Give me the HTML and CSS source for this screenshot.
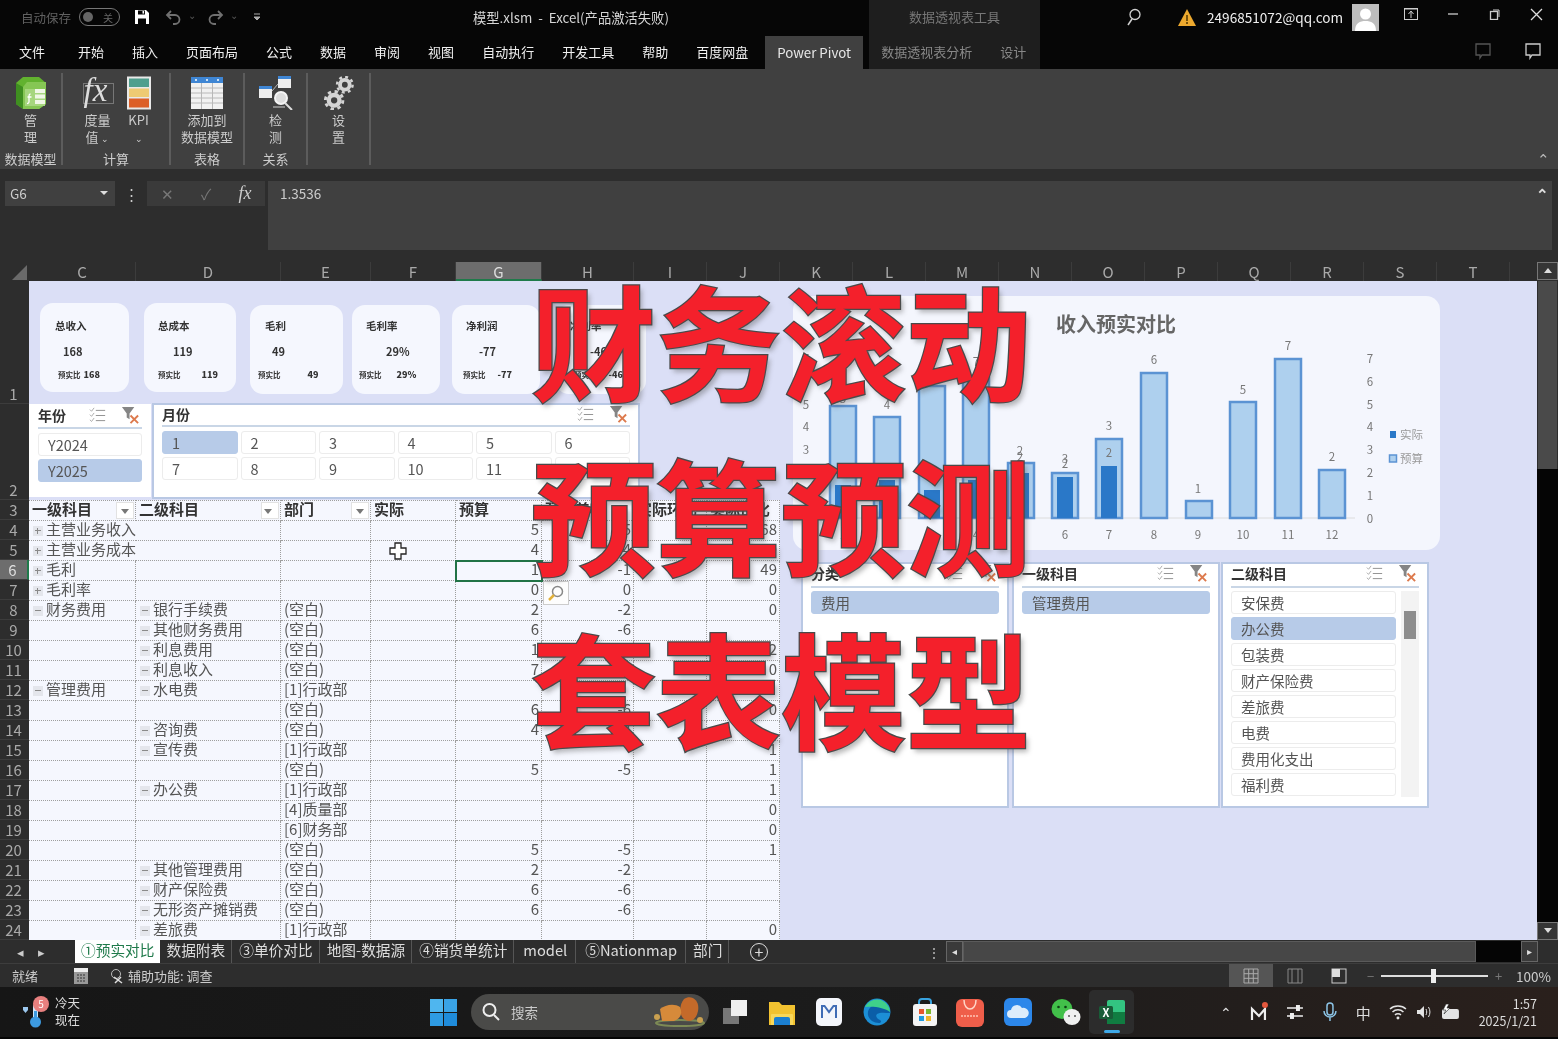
FILE: index.html
```html
<!DOCTYPE html>
<html lang="zh-CN">
<head>
<meta charset="utf-8">
<title>模型.xlsm - Excel</title>
<link rel="stylesheet" href="styles.css">
</head>
<body>
<svg class="defs" width="0" height="0" aria-hidden="true">
  <symbol id="i-multi" viewBox="0 0 20 20"><g fill="none" stroke="#8d8d8d" stroke-width="1.1"><path d="M1 3l2 2 3-4M1 9l2 2 3-4M1 15l2 2 3-4" stroke="#a8a8a8"/><path d="M8 4h11M8 10h11M8 16h11"/></g></symbol>
  <symbol id="i-clear" viewBox="0 0 20 20"><path d="M1 1h13L9 8v6L6 12V8z" fill="#858585"/><path d="M10 10l8 8M18 10l-8 8" stroke="#dd7a4d" stroke-width="2"/></symbol>
</svg>
<div class="app">
  <header class="titlebar">
    <div class="qat">
      <span class="autosave">自动保存</span>
      <span class="toggle"><i></i><b>关</b></span>
      <svg class="q-save" width="16" height="16" viewBox="0 0 16 16"><path d="M1 1h11l3 3v11H1z" fill="#fff"/><path d="M4 1.500h7v4H4z" fill="#050505"/><path d="M4 9.500h8V15H4z" fill="#050505"/><path d="M8.500 2h1.600v2.600H8.500z" fill="#fff"/></svg>
      <svg class="q-undo" width="17" height="16" viewBox="0 0 17 16"><path d="M6 2L2 6l4 4M2 6h8a4.500 4.500 0 0 1 0 9H8" fill="none" stroke="#707070" stroke-width="1.800"/></svg>
      <span class="q-caret">⌄</span>
      <svg class="q-redo" width="17" height="16" viewBox="0 0 17 16"><path d="M11 2l4 4-4 4M15 6H7a4.500 4.500 0 0 0 0 9h2" fill="none" stroke="#707070" stroke-width="1.800"/></svg>
      <span class="q-caret">⌄</span>
      <svg class="q-more" width="8" height="8" viewBox="0 0 8 8"><path d="M1 1h6M1 4h6l-3 3z" stroke="#aaa" fill="#aaa"/></svg>
    </div>
    <div class="doc">模型.xlsm&nbsp; -&nbsp; Excel(产品激活失败)</div>
    <div class="ctx-title">数据透视表工具</div>
    <svg class="t-search" width="18" height="18" viewBox="0 0 18 18"><circle cx="11" cy="6.500" r="5" fill="none" stroke="#d0d0d0" stroke-width="1.300"/><path d="M8 11l-4 6" stroke="#d0d0d0" stroke-width="1.500"/></svg>
    <svg class="t-warn" width="18" height="17" viewBox="0 0 18 17"><path d="M9 0l9 17H0z" fill="#eda92e"/><path d="M8.200 6h1.600v6H8.200zM8.200 13h1.600v2H8.200z" fill="#5a3d00"/></svg>
    <span class="email">2496851072@qq.com</span>
    <svg class="avatar" width="27" height="27" viewBox="0 0 27 27"><rect width="27" height="27" fill="#bdbdbd"/><circle cx="13.500" cy="10" r="5.500" fill="#fff"/><path d="M3 27c0-8 5-10 10.500-10S24 19 24 27z" fill="#fff"/></svg>
    <svg class="win-a" width="14" height="14" viewBox="0 0 14 14"><rect x=".5" y="1.500" width="13" height="11" fill="none" stroke="#ccc"/><path d="M7 11V5M4.500 7L7 4l2.500 3M1 2h12" stroke="#ccc" fill="none"/></svg>
    <svg class="win-b" width="12" height="12" viewBox="0 0 12 12"><path d="M1 6h10" stroke="#ccc" stroke-width="1.300"/></svg>
    <svg class="win-c" width="12" height="12" viewBox="0 0 12 12"><rect x="1.500" y="3.500" width="7" height="8" fill="none" stroke="#ccc" stroke-width="1.300"/><path d="M4 2h6v7" fill="none" stroke="#ccc"/></svg>
    <svg class="win-d" width="13" height="13" viewBox="0 0 13 13"><path d="M1 1l11 11M12 1L1 12" stroke="#ddd" stroke-width="1.300"/></svg>
  </header>

  <nav class="tabs">
    <span class="tab tab-first">文件</span><span class="tab">开始</span><span class="tab">插入</span><span class="tab">页面布局</span><span class="tab">公式</span><span class="tab">数据</span><span class="tab">审阅</span><span class="tab">视图</span><span class="tab">自动执行</span><span class="tab">开发工具</span><span class="tab">帮助</span><span class="tab">百度网盘</span>
    <span class="tab tab-active">Power Pivot</span>
    <div class="ctx-tabs"><span class="tab tab-ctx-a">数据透视表分析</span><span class="tab tab-ctx-b">设计</span></div>
    <svg class="chat-a" width="18" height="18" viewBox="0 0 18 18"><path d="M2 2h14v11H8l-2 3v-3H2z" fill="none" stroke="#555" stroke-width="1.300"/></svg>
    <svg class="chat-b" width="18" height="18" viewBox="0 0 18 18"><path d="M2 2h14v11H8l-2 3v-3H2z" fill="none" stroke="#ccc" stroke-width="1.300"/></svg>
  </nav>

  <section class="ribbon">
    <div class="group g1">
      <div class="cmds">
        <div class="cmd">
          <svg class="ic" width="32" height="34" viewBox="0 0 32 34"><path d="M8 1h16l7 6v21l-7 5H8l-7-5V7z" fill="#62b22f"/><path d="M1 7l7 4v22l-7-5z" fill="#3f8f20"/><path d="M8 11L12 6h19v22l-7 5H8z" fill="#86c654"/><path d="M10 13h20v17H10z" fill="#a6d67e"/><path d="M20 13h10v4H20zM20 18.500h10v4H20zM20 24h10v4H20z" fill="#f0f7e6"/><path d="M15.500 18c-1.500 0-1.500 1-1.500 2v6c0 1-1 1.500-2 1.500M12.500 21h4" stroke="#fff" stroke-width="1.300" fill="none"/></svg>
          <span class="lbl">管<br>理</span>
        </div>
      </div>
      <div class="gname">数据模型</div>
    </div>
    <div class="group g2">
      <div class="cmds">
        <div class="cmd cmd-fx">
          <span class="fx-ic"><span class="fx-box"></span><span class="fx-t">fx</span></span>
          <span class="lbl">度量<br>值 <em class="chev">⌄</em></span>
        </div>
        <div class="cmd cmd-kpi">
          <svg class="ic" width="24" height="33" viewBox="0 0 24 33"><rect width="24" height="33" fill="#e9e9e9"/><rect x="2" y="2" width="20" height="8.500" fill="#4f9f8e"/><rect x="2" y="12" width="20" height="8.500" fill="#eeca73"/><rect x="2" y="22" width="20" height="9" fill="#dc5f28"/></svg>
          <span class="lbl">KPI<br><em class="chev">⌄</em></span>
        </div>
      </div>
      <div class="gname">计算</div>
    </div>
    <div class="group g3">
      <div class="cmds">
        <div class="cmd">
          <svg class="ic" width="32" height="32" viewBox="0 0 32 32"><rect width="32" height="32" fill="#f1f1f1"/><rect width="32" height="6" fill="#3f86d4"/><path d="M0 11h32M0 16h32M0 21h32M0 26h32M10.500 6v26M21.500 6v26" stroke="#b8b8b8"/><circle cx="5" cy="3" r="1" fill="#fff"/><circle cx="16" cy="3" r="1" fill="#fff"/><circle cx="27" cy="3" r="1" fill="#fff"/></svg>
          <span class="lbl">添加到<br>数据模型</span>
        </div>
      </div>
      <div class="gname">表格</div>
    </div>
    <div class="group g4">
      <div class="cmds">
        <div class="cmd">
          <svg class="ic" width="34" height="34" viewBox="0 0 34 34"><rect x="19" y="0" width="13" height="12" fill="#eee"/><rect x="19" y="0" width="13" height="3" fill="#3f86d4"/><rect x="0" y="10" width="13" height="12" fill="#eee"/><rect x="0" y="10" width="13" height="3" fill="#3f86d4"/><path d="M13 15l6-7" stroke="#bbb"/><circle cx="22" cy="22" r="6" fill="#ddd" stroke="#f4f4f4" stroke-width="2"/><path d="M26 27l7 7" stroke="#ddd" stroke-width="2"/><path d="M14 31h12" stroke="#888" stroke-width="2"/></svg>
          <span class="lbl">检<br>测</span>
        </div>
      </div>
      <div class="gname">关系</div>
    </div>
    <div class="group g5">
      <div class="cmds">
        <div class="cmd">
          <svg class="ic" width="32" height="35" viewBox="0 0 32 35"><g fill="none" stroke="#d4d4d4"><circle cx="22" cy="9" r="5" stroke-width="4"/><circle cx="22" cy="9" r="8" stroke-width="2.500" stroke-dasharray="3 3.300"/><circle cx="11" cy="25" r="5.500" stroke-width="4.500"/><circle cx="11" cy="25" r="9" stroke-width="3" stroke-dasharray="3.500 3.600"/></g></svg>
          <span class="lbl">设<br>置</span>
        </div>
      </div>
      <div class="gname">&nbsp;</div>
    </div>
    <span class="collapse">⌃</span>
  </section>

  <section class="formula">
    <div class="namebox"><span>G6</span><i class="caret"></i></div>
    <span class="vdots">⋮</span>
    <div class="fbtns"><span class="fb-x">✕</span><span class="fb-ok">✓</span><span class="fb-fx">fx</span></div>
    <div class="finput"><span>1.3536</span><b class="finput-up">⌃</b></div>
  </section>

  <div class="colheads">
    <div class="corner"><i></i></div>
    <div class="ch c-c">C</div><div class="ch c-d">D</div><div class="ch c-e">E</div><div class="ch c-f">F</div><div class="ch c-g sel">G</div><div class="ch c-h">H</div><div class="ch c-i">I</div><div class="ch c-j">J</div>
    <div class="ch">K</div><div class="ch">L</div><div class="ch">M</div><div class="ch">N</div><div class="ch">O</div><div class="ch">P</div><div class="ch">Q</div><div class="ch">R</div><div class="ch">S</div><div class="ch">T</div>
    <div class="ch-rest"></div>
    <div class="vs-up"><i></i></div>
  </div>

  <div class="sheet">
    <div class="rowheads">
      <div class="rh r1">1</div><div class="rh r2">2</div><div class="rh">3</div><div class="rh">4</div><div class="rh">5</div><div class="rh sel">6</div><div class="rh">7</div><div class="rh">8</div><div class="rh">9</div><div class="rh">10</div><div class="rh">11</div><div class="rh">12</div><div class="rh">13</div><div class="rh">14</div><div class="rh">15</div><div class="rh">16</div><div class="rh">17</div><div class="rh">18</div><div class="rh">19</div><div class="rh">20</div><div class="rh">21</div><div class="rh">22</div><div class="rh">23</div><div class="rh">24</div>
    </div>
    <div class="canvas">
      <table class="pivot">
        <colgroup><col class="w-c"><col class="w-d"><col class="w-e"><col class="w-f"><col class="w-g"><col class="w-h"><col class="w-i"><col class="w-j"></colgroup>
        <thead><tr><th>一级科目<i class="dd"></i></th><th>二级科目<i class="dd dd-s"></i></th><th>部门<i class="dd"></i></th><th>实际</th><th>预算</th><th>预实差额</th><th>实际环比</th><th>实际占比</th></tr></thead>
        <tbody>
          <tr><td colspan="2"><i class="ex p"></i>主营业务收入</td><td></td><td></td><td class="n">5</td><td class="n">-5</td><td></td><td class="n">168</td></tr>
          <tr><td colspan="2"><i class="ex p"></i>主营业务成本</td><td></td><td></td><td class="n">4</td><td class="n">-4</td><td></td><td class="n">119</td></tr>
          <tr><td><i class="ex p"></i>毛利</td><td></td><td></td><td></td><td class="n cur">1</td><td class="n">-1</td><td></td><td class="n">49</td></tr>
          <tr><td><i class="ex p"></i>毛利率</td><td></td><td></td><td></td><td class="n">0</td><td class="n">0</td><td></td><td class="n">0</td></tr>
          <tr><td><i class="ex"></i>财务费用</td><td><i class="ex"></i>银行手续费</td><td>(空白)</td><td></td><td class="n">2</td><td class="n">-2</td><td></td><td class="n">0</td></tr>
          <tr><td></td><td><i class="ex"></i>其他财务费用</td><td>(空白)</td><td></td><td class="n">6</td><td class="n">-6</td><td></td><td></td></tr>
          <tr><td></td><td><i class="ex"></i>利息费用</td><td>(空白)</td><td></td><td class="n">1</td><td class="n">-1</td><td></td><td class="n">2</td></tr>
          <tr><td></td><td><i class="ex"></i>利息收入</td><td>(空白)</td><td></td><td class="n">7</td><td class="n">-7</td><td></td><td class="n">0</td></tr>
          <tr><td><i class="ex"></i>管理费用</td><td><i class="ex"></i>水电费</td><td>[1]行政部</td><td></td><td></td><td></td><td></td><td></td></tr>
          <tr><td></td><td></td><td>(空白)</td><td></td><td class="n">6</td><td class="n">-6</td><td></td><td class="n">0</td></tr>
          <tr><td></td><td><i class="ex"></i>咨询费</td><td>(空白)</td><td></td><td class="n">4</td><td class="n">-4</td><td></td><td></td></tr>
          <tr><td></td><td><i class="ex"></i>宣传费</td><td>[1]行政部</td><td></td><td></td><td></td><td></td><td class="n">1</td></tr>
          <tr><td></td><td></td><td>(空白)</td><td></td><td class="n">5</td><td class="n">-5</td><td></td><td class="n">1</td></tr>
          <tr><td></td><td><i class="ex"></i>办公费</td><td>[1]行政部</td><td></td><td></td><td></td><td></td><td class="n">1</td></tr>
          <tr><td></td><td></td><td>[4]质量部</td><td></td><td></td><td></td><td></td><td class="n">0</td></tr>
          <tr><td></td><td></td><td>[6]财务部</td><td></td><td></td><td></td><td></td><td class="n">0</td></tr>
          <tr><td></td><td></td><td>(空白)</td><td></td><td class="n">5</td><td class="n">-5</td><td></td><td class="n">1</td></tr>
          <tr><td></td><td><i class="ex"></i>其他管理费用</td><td>(空白)</td><td></td><td class="n">2</td><td class="n">-2</td><td></td><td></td></tr>
          <tr><td></td><td><i class="ex"></i>财产保险费</td><td>(空白)</td><td></td><td class="n">6</td><td class="n">-6</td><td></td><td></td></tr>
          <tr><td></td><td><i class="ex"></i>无形资产摊销费</td><td>(空白)</td><td></td><td class="n">6</td><td class="n">-6</td><td></td><td></td></tr>
          <tr><td></td><td><i class="ex"></i>差旅费</td><td>[1]行政部</td><td></td><td></td><td></td><td></td><td class="n">0</td></tr>
        </tbody>
      </table>

      <div class="card k1"><div class="k-t">总收入</div><div class="k-v">168</div><div class="k-f"><span>预实比</span><b>168</b></div></div>
      <div class="card k2"><div class="k-t">总成本</div><div class="k-v">119</div><div class="k-f"><span>预实比</span><b>119</b></div></div>
      <div class="card k3"><div class="k-t">毛利</div><div class="k-v">49</div><div class="k-f"><span>预实比</span><b>49</b></div></div>
      <div class="card k4"><div class="k-t">毛利率</div><div class="k-v">29%</div><div class="k-f"><span>预实比</span><b>29%</b></div></div>
      <div class="card k5"><div class="k-t">净利润</div><div class="k-v">-77</div><div class="k-f"><span>预实比</span><b>-77</b></div></div>
      <div class="card k6"><div class="k-t">净利率</div><div class="k-v">-46%</div><div class="k-f"><span>预实比</span><b>-46%</b></div></div>

      <div class="slicer s-year">
        <div class="s-head"><span>年份</span><svg class="s-i" width="17" height="17"><use href="#i-multi"/></svg><svg class="s-i" width="19" height="19"><use href="#i-clear"/></svg></div>
        <div class="s-list"><div class="btn">Y2024</div><div class="btn on">Y2025</div></div>
      </div>
      <div class="slicer s-month">
        <div class="s-head"><span>月份</span><svg class="s-i" width="17" height="17"><use href="#i-multi"/></svg><svg class="s-i" width="19" height="19"><use href="#i-clear"/></svg></div>
        <div class="s-grid"><div class="btn on">1</div><div class="btn">2</div><div class="btn">3</div><div class="btn">4</div><div class="btn">5</div><div class="btn">6</div><div class="btn">7</div><div class="btn">8</div><div class="btn">9</div><div class="btn">10</div><div class="btn">11</div><div class="btn">12</div></div>
      </div>

      <div class="chart">
        <svg width="647" height="254" viewBox="793 296 647 254">
          <text x="1056" y="332" class="c-title">收入预实对比</text>
          <g class="axis">
            <text x="806" y="363">7</text><text x="806" y="386">6</text><text x="806" y="409">5</text><text x="806" y="431">4</text><text x="806" y="454">3</text><text x="806" y="477">2</text><text x="806" y="500">1</text><text x="806" y="523">0</text>
            <text x="1370" y="363">7</text><text x="1370" y="386">6</text><text x="1370" y="409">5</text><text x="1370" y="431">4</text><text x="1370" y="454">3</text><text x="1370" y="477">2</text><text x="1370" y="500">1</text><text x="1370" y="523">0</text>
          </g>
          <path d="M821 518h534" stroke="#dcdcdc"/>
          <g class="bud">
            <rect x="830" y="406" width="26" height="112"/><rect x="874" y="417" width="26" height="101"/><rect x="919" y="386" width="26" height="132"/><rect x="963" y="378" width="26" height="140"/><rect x="1008" y="463" width="26" height="55"/><rect x="1052" y="473" width="26" height="45"/><rect x="1096" y="439" width="26" height="79"/><rect x="1141" y="373" width="26" height="145"/><rect x="1186" y="501" width="26" height="17"/><rect x="1230" y="402" width="26" height="116"/><rect x="1275" y="359" width="26" height="159"/><rect x="1319" y="470" width="26" height="48"/>
          </g>
          <g class="act">
            <rect x="835" y="485" width="16" height="33"/><rect x="879" y="480" width="16" height="38"/><rect x="924" y="490" width="16" height="28"/><rect x="968" y="480" width="16" height="38"/><rect x="1013" y="473" width="16" height="45"/><rect x="1057" y="477" width="16" height="41"/><rect x="1101" y="466" width="16" height="52"/>
          </g>
          <g class="dl">
            <text x="843" y="403">5</text><text x="887" y="409">4</text><text x="932" y="381">6</text><text x="976" y="366">7</text><text x="1020" y="455">2</text><text x="1020" y="461">2</text><text x="1065" y="463">3</text><text x="1065" y="468">2</text><text x="1109" y="430">3</text><text x="1109" y="457">2</text><text x="1154" y="364">6</text><text x="1198" y="493">1</text><text x="1243" y="394">5</text><text x="1288" y="350">7</text><text x="1332" y="461">2</text>
            <text x="843" y="539">1</text><text x="887" y="539">2</text><text x="932" y="539">3</text><text x="976" y="539">4</text><text x="1020" y="539">5</text><text x="1065" y="539">6</text><text x="1109" y="539">7</text><text x="1154" y="539">8</text><text x="1198" y="539">9</text><text x="1243" y="539">10</text><text x="1288" y="539">11</text><text x="1332" y="539">12</text>
          </g>
          <rect x="1390" y="431" width="6" height="7" fill="#2a78c8"/><text x="1400" y="439" class="lg">实际</text>
          <rect x="1389.500" y="455" width="7" height="7" fill="#aed0ee" stroke="#5b93d3" stroke-width="1.500"/><text x="1400" y="463" class="lg">预算</text>
        </svg>
      </div>

      <div class="slicer s-a">
        <div class="s-head"><span>分类</span><svg class="s-i" width="17" height="17"><use href="#i-multi"/></svg><svg class="s-i" width="19" height="19"><use href="#i-clear"/></svg></div>
        <div class="s-list"><div class="btn on">费用</div></div>
      </div>
      <div class="slicer s-b">
        <div class="s-head"><span>一级科目</span><svg class="s-i" width="17" height="17"><use href="#i-multi"/></svg><svg class="s-i" width="19" height="19"><use href="#i-clear"/></svg></div>
        <div class="s-list"><div class="btn on">管理费用</div></div>
      </div>
      <div class="slicer s-c">
        <div class="s-head"><span>二级科目</span><svg class="s-i" width="17" height="17"><use href="#i-multi"/></svg><svg class="s-i" width="19" height="19"><use href="#i-clear"/></svg></div>
        <div class="s-scroll">
          <div class="s-list"><div class="btn">安保费</div><div class="btn on">办公费</div><div class="btn">包装费</div><div class="btn">财产保险费</div><div class="btn">差旅费</div><div class="btn">电费</div><div class="btn">费用化支出</div><div class="btn">福利费</div></div>
          <div class="s-bar"><i></i></div>
        </div>
      </div>

      <svg class="cross" width="18" height="18" viewBox="0 0 18 18"><path d="M6 1h6v5h5v6h-5v5H6v-5H1V6h5z" fill="#fff" stroke="#222" stroke-width="1.300"/></svg>
      <div class="quick"><svg width="18" height="18" viewBox="0 0 18 18"><circle cx="10.500" cy="7.500" r="5" fill="none" stroke="#888" stroke-width="1.500"/><path d="M7 11l-5 5" stroke="#e3b23c" stroke-width="2.500"/></svg></div>
    </div>
    <div class="vscroll"><div class="vs-thumb"></div><div class="vs-empty"></div><div class="vs-down"><i></i></div></div>
  </div>

  <div class="sheettabs">
    <span class="nav-arrow">◂</span><span class="nav-arrow">▸</span>
    <div class="stabs">
      <span class="st on">①预实对比</span><span class="st">数据附表</span><span class="st">③单价对比</span><span class="st">地图-数据源</span><span class="st">④销货单统计</span><span class="st st-m">model</span><span class="st st-m">⑤Nationmap</span><span class="st">部门</span>
    </div>
    <span class="addsheet">+</span>
    <span class="st-dots">⋮</span>
    <div class="hscroll"><span class="hs-b">◂</span><div class="hs-thumb"></div><div class="hs-empty"></div><span class="hs-b hs-r">▸</span></div>
  </div>

  <footer class="status">
    <span class="ready">就绪</span>
    <svg class="st-cal" width="14" height="16" viewBox="0 0 14 16"><rect width="14" height="16" fill="#999"/><rect y="0" width="14" height="4" fill="#eee"/><path d="M3 7h2M6 7h2M9 7h2M3 10h2M6 10h2M9 10h2M3 13h2M6 13h2M9 13h2" stroke="#333"/></svg>
    <svg class="st-acc" width="14" height="16" viewBox="0 0 14 16"><circle cx="6" cy="6" r="4.500" fill="none" stroke="#bbb"/><path d="M4 9l8 6M11 9l-6 6" stroke="#ddd" stroke-width="1.500"/></svg>
    <span class="acc">辅助功能: 调查</span>
    <div class="views">
      <span class="v on"><svg width="16" height="16" viewBox="0 0 16 16"><path d="M1 1h14v14H1zM1 5.700h14M1 10.300h14M5.700 1v14M10.300 1v14" fill="none" stroke="#aaa"/></svg></span>
      <span class="v"><svg width="16" height="16" viewBox="0 0 16 16"><path d="M1 1h14v14H1zM5 1v14M11 1v14" fill="none" stroke="#888"/></svg></span>
      <span class="v"><svg width="16" height="16" viewBox="0 0 16 16"><rect x="1" y="1" width="14" height="14" fill="#2d2d2d" stroke="#ccc"/><rect x="1" y="1" width="8" height="8" fill="#ddd"/></svg></span>
    </div>
    <div class="zoomer"><span class="z-s">−</span><div class="z-track"><i></i></div><span class="z-s">+</span><span class="z-val">100%</span></div>
  </footer>

  <div class="taskbar">
    <div class="weather">
      <svg class="w-ic" width="28" height="34" viewBox="0 0 28 34"><rect x="11" y="9" width="5" height="16" rx="2.500" fill="#cfe6f7"/><circle cx="13.500" cy="27" r="5.500" fill="#3d9ae0"/><rect x="12" y="16" width="3" height="10" fill="#3d9ae0"/><path d="M1 12h5v3l-2.500 3L1 15z" fill="#9cc8ee"/><circle cx="19" cy="9" r="8" fill="#e8807f"/><text x="19" y="13" class="w-n">5</text></svg>
      <div class="w-t"><span>冷天</span><span>现在</span></div>
    </div>
    <div class="center">
      <svg class="start" width="27" height="27" viewBox="0 0 27 27"><rect width="13" height="13" fill="#4fb6ef"/><rect x="14" width="13" height="13" fill="#3aa3e6"/><rect y="14" width="13" height="13" fill="#2e9be3"/><rect x="14" y="14" width="13" height="13" fill="#1f8cdb"/></svg>
      <div class="search">
        <svg width="20" height="20" viewBox="0 0 20 20"><circle cx="8.500" cy="8" r="6" fill="none" stroke="#eee" stroke-width="2"/><path d="M13 13l5 5" stroke="#eee" stroke-width="2"/></svg>
        <span>搜索</span>
        <svg class="deco" width="56" height="34" viewBox="0 0 56 34"><ellipse cx="30" cy="28" rx="24" ry="3" fill="none" stroke="#7d8a55" stroke-width="2"/><path d="M34 4c8-5 16 2 14 12s-9 12-14 8-5-14 0-20z" fill="#c46a2a"/><path d="M10 14c5-4 14-6 20-2 3 7 0 12-6 14H12z" fill="#d68a3a"/><circle cx="7" cy="22" r="3" fill="#c9a050"/><circle cx="50" cy="25" r="3" fill="#c9a050"/></svg>
      </div>
      <svg class="ti ti-task" width="28" height="28" viewBox="0 0 28 28"><rect x="2" y="10" width="16" height="16" fill="#777"/><rect x="10" y="2" width="16" height="16" fill="#efefef"/></svg>
      <svg class="ti ti-file" width="28" height="28" viewBox="0 0 28 28"><path d="M1 4h10l3 3h13v20H1z" fill="#f2c230"/><path d="M4 16h20a1 1 0 0 1 1 1v10H3V17a1 1 0 0 1 1-1z" fill="#f8d75a"/><path d="M8 19h12a2 2 0 0 1 2 2v6H6v-6a2 2 0 0 1 2-2z" fill="#1b7fd1"/></svg>
      <svg class="ti ti-m" width="26" height="28" viewBox="0 0 26 28"><rect width="26" height="28" rx="5" fill="#f4f6fb"/><path d="M6 20V8h2.500l4.500 6 4.500-6H20v12" fill="none" stroke="#3f6cb5" stroke-width="2"/></svg>
      <svg class="ti" width="28" height="28" viewBox="0 0 28 28"><circle cx="14" cy="14" r="13.500" fill="#1c8fd6"/><path d="M27 15c0-5-5-9-11-9-7 0-12 5-11 11 1 5 6 8 11 8 2 0 3-2 1-3-3-1-5-4-3-6 3-2 9-1 13-1z" fill="#0b5ea8"/><path d="M2 9C5 3 12 0 18 2c5 2 9 7 9 12-5-4-15-6-25-5z" fill="#3fd08a"/></svg>
      <svg class="ti" width="26" height="28" viewBox="0 0 26 28"><path d="M7 8V4a3 3 0 0 1 3-3h6a3 3 0 0 1 3 3v4" fill="none" stroke="#38a3e0" stroke-width="2"/><rect x="1" y="6" width="24" height="22" rx="3" fill="#f4f4f4"/><rect x="7" y="11" width="5" height="5" fill="#e7562e"/><rect x="14" y="11" width="5" height="5" fill="#7cb82f"/><rect x="7" y="18" width="5" height="5" fill="#1f9be0"/><rect x="14" y="18" width="5" height="5" fill="#f0b429"/></svg>
      <svg class="ti ti-hw" width="28" height="30" viewBox="0 0 28 30"><rect y="2" width="28" height="28" rx="6" fill="#ef5e4a"/><path d="M8 3c0 6 3 9 6 9s6-3 6-9" fill="none" stroke="#ffd5c8" stroke-width="1.500"/><path d="M5 19h18" stroke="#ffc4b5" stroke-width="1.500" stroke-dasharray="2 1"/></svg>
      <svg class="ti ti-cl" width="28" height="30" viewBox="0 0 28 30"><rect y="1" width="28" height="28" rx="6" fill="#2c87ea"/><path d="M7 21a4 4 0 0 1 0-8 6 6 0 0 1 11-2 5 5 0 0 1 3 10z" fill="#dcecfb"/></svg>
      <svg class="ti ti-wx" width="30" height="28" viewBox="0 0 30 28"><ellipse cx="11" cy="11" rx="10.500" ry="10" fill="#42c04a"/><circle cx="7.500" cy="9" r="1.300" fill="#0d4014"/><circle cx="14.500" cy="9" r="1.300" fill="#0d4014"/><ellipse cx="21" cy="19" rx="8.500" ry="8" fill="#f0f0f0"/><circle cx="18" cy="18" r="1" fill="#555"/><circle cx="24" cy="18" r="1" fill="#555"/></svg>
      <div class="ti-excel"><svg width="26" height="26" viewBox="0 0 26 26"><rect x="8" y="1" width="18" height="24" rx="2" fill="#33c481"/><rect x="8" y="13" width="18" height="12" fill="#107c41"/><rect y="7" width="14" height="13" rx="1.500" fill="#185c37"/><text x="7" y="18" class="x-t">X</text></svg><i></i></div>
    </div>
    <div class="tray">
      <span class="tr-up">⌃</span>
      <svg class="tr-m" width="18" height="20" viewBox="0 0 18 20"><path d="M2 18V7l7 7 6-7v11" fill="none" stroke="#eee" stroke-width="2.200"/><circle cx="15" cy="3" r="3" fill="#e4583e"/></svg>
      <svg width="18" height="18" viewBox="0 0 18 18"><path d="M1 5h16M1 13h16" stroke="#eee" stroke-width="1.500"/><rect x="10" y="2" width="4" height="6" fill="#eee"/><rect x="4" y="10" width="4" height="6" fill="#eee"/></svg>
      <svg width="16" height="20" viewBox="0 0 16 20"><rect x="5" y="1" width="6" height="12" rx="3" fill="none" stroke="#8cc4e6" stroke-width="1.500"/><path d="M2 9a6 6 0 0 0 12 0M8 15v4" fill="none" stroke="#8cc4e6" stroke-width="1.500"/></svg>
      <span class="tr-zh">中</span>
      <svg width="18" height="16" viewBox="0 0 18 16"><g fill="none" stroke="#e4e4e4" stroke-width="1.500"><path d="M1 5c4-4 12-4 16 0M3.500 8c3-3 8-3 11 0M6 11c1.500-1.500 4.500-1.500 6 0"/></g><circle cx="9" cy="14" r="1.500" fill="#e4e4e4"/></svg>
      <svg class="tr-tight" width="16" height="16" viewBox="0 0 16 16"><path d="M1 6h3l4-4v12l-4-4H1z" fill="#e4e4e4"/><path d="M10 5c1 2 1 4 0 6M12.500 3c2 3 2 7 0 10" fill="none" stroke="#e4e4e4"/></svg>
      <svg class="tr-tight" width="20" height="16" viewBox="0 0 20 16"><rect x="1" y="5" width="17" height="10" rx="2" fill="#e4e4e4"/><path d="M5 0l-3 6h3L3 10l6-6H6l2-4z" fill="#fff" stroke="#222" stroke-width=".6"/></svg>
      <div class="clock"><span>1:57</span><span>2025/1/21</span></div>
    </div>
  </div>

  <div class="bigtitle"><div>财务滚动</div><div>预算预测</div><div>套表模型</div></div>
</div>
</body>
</html>
```

FILE: styles.css
```css
* { box-sizing: border-box; }
html, body { margin: 0; padding: 0; background: #000; }
body { font-family: "Noto Sans CJK SC", "Open Sans", sans-serif; }
.defs { position: absolute; }
.app { position: relative; width: 1558px; height: 1039px; overflow: hidden; display: flex; flex-direction: column; filter: blur(.5px); background: #2d2d2d; }
em, i { font-style: normal; }

/* title bar */
.titlebar { height: 34px; background: #060606; display: flex; align-items: center; flex: none; }
.qat { display: flex; align-items: center; width: 473px; padding-left: 21px; flex: none; }
.autosave { font-size: 12.500px; color: #616161; width: 58px; }
.toggle { width: 41px; height: 18px; border: 1px solid #777; border-radius: 9px; display: flex; align-items: center; justify-content: space-between; padding: 0 6px 0 3px; }
.toggle i { width: 10px; height: 10px; border-radius: 50%; background: #666; }
.toggle b { font-weight: 400; font-size: 10px; color: #666; }
.q-save { margin-left: 14px; }
.q-undo { margin-left: 15px; }
.q-redo { margin-left: 7px; }
.q-caret { color: #555; font-size: 10px; margin: -5px 0 0 6px; width: 12px; }
.q-more { margin-left: 11px; }
.doc { width: 396px; color: #d6d6d6; font-size: 13.300px; flex: none; }
.ctx-title { width: 171px; height: 34px; background: #1e1e1e; color: #777; font-size: 13px; line-height: 34px; text-align: center; flex: none; }
.t-search { margin-left: 84px; }
.t-warn { margin-left: 36px; }
.email { color: #eee; font-size: 13.600px; margin-left: 11px; width: 136px; white-space: nowrap; }
.avatar { margin-left: 9px; }
.win-a { margin: -6px 0 0 25px; }
.win-b { margin: -6px 0 0 29px; }
.win-c { margin: -6px 0 0 30px; }
.win-d { margin: -6px 0 0 29px; }

/* ribbon tabs */
.tabs { height: 35px; background: #060606; display: flex; align-items: stretch; padding-left: 5px; flex: none; color: #f0f0f0; font-size: 13px; }
.tab { padding: 0 14px; line-height: 35px; white-space: nowrap; }
.tab-first { margin-right: 5px; }
.tab-active { background: #404040; width: 98px; padding: 0 12px; margin: 2px 0 0 3px; line-height: 33px; font-size: 13.300px; color: #e8e8e8; }
.ctx-tabs { display: flex; background: #1e1e1e; margin-left: 6px; color: #888; }
.tab-ctx-a { padding-left: 12px; }
.chat-a { margin: 8px 0 0 434px; }
.chat-b { margin: 8px 0 0 32px; }

/* ribbon */
.ribbon { height: 100px; background: #404040; display: flex; padding: 4px 0 4px; position: relative; flex: none; color: #ccc; }
.group { border-right: 2px solid #5c5c5c; display: flex; flex-direction: column; height: 92px; align-items: center; }
.g1 { width: 63px; } .g2 { width: 108px; } .g3 { width: 74px; } .g4 { width: 63px; } .g5 { width: 63px; }
.cmds { display: flex; flex: 1; justify-content: center; min-height: 0; }
.cmd { display: flex; flex-direction: column; align-items: center; padding-top: 3px; }
.ic { height: 34px; flex: none; }
.lbl { font-size: 13px; line-height: 17px; text-align: center; margin-top: 1px; white-space: nowrap; }
.chev { font-size: 9px; line-height: 9px; }
.gname { font-size: 13px; line-height: 16px; height: 16px; margin-bottom: -2px; white-space: nowrap; }
.cmd-fx { margin-right: 13px; }
.fx-ic { position: relative; display: block; width: 32px; height: 34px; }
.fx-box { position: absolute; left: 1px; top: 7px; width: 31px; height: 21px; border: 1px solid #777; }
.fx-t { position: absolute; left: 2px; top: -5px; font: italic 33px/38px "Liberation Serif", serif; color: #ddd; }
.collapse { position: absolute; right: 8px; bottom: 0; color: #bbb; font-size: 15px; }

/* formula bar */
.formula { height: 93px; background: #2d2d2d; display: flex; padding-top: 12px; flex: none; }
.namebox { margin-left: 5px; width: 110px; height: 25px; background: #404040; color: #ccc; font-size: 13.500px; line-height: 25px; padding-left: 5px; position: relative; }
.caret { position: absolute; right: 7px; top: 10px; border: 4px solid transparent; border-top-color: #ddd; border-bottom: 0; }
.vdots { width: 32px; text-align: center; color: #ccc; font-size: 15px; line-height: 25px; }
.fbtns { width: 118px; height: 25px; background: #3a3a3a; display: flex; align-items: center; justify-content: space-around; color: #777; font-size: 15px; }
.fb-fx { font: italic 18px "Liberation Serif", serif; color: #ccc; }
.finput { margin-left: 3px; width: 1284px; height: 69px; background: #404040; color: #ccc; font-size: 13.500px; line-height: 25px; padding-left: 12px; display: flex; justify-content: space-between; padding-right: 3px; }
.finput-up { font-size: 15px; color: #ddd; }

/* column headers */
.colheads { height: 19px; display: flex; flex: none; background: #2d2d2d; }
.corner { width: 29px; position: relative; }
.corner i { position: absolute; left: 12px; bottom: 1px; border-style: solid; border-width: 0 0 15px 15px; border-color: transparent transparent #6a6a6a transparent; }
.ch { width: 73px; color: #a9a9a9; font-size: 15px; line-height: 19px; text-align: center; border-right: 1px solid #3c3c3c; flex: none; }
.c-c { width: 107px; } .c-d { width: 145px; } .c-e { width: 90px; } .c-f { width: 85px; } .c-g { width: 86px; } .c-h { width: 92px; } .c-i { width: 73px; } .c-j { width: 73px; }
.ch.sel { background: #6d6d6d; color: #ddd; border-bottom: 2px solid #1f7a4a; }
.ch-rest { width: 27px; }
.vs-up, .vs-down { width: 21px; height: 18px; background: #353535; border: 1px solid #777; position: relative; }
.vs-up i { position: absolute; left: 6px; top: 5px; border: 4px solid transparent; border-bottom: 5px solid #ddd; border-top: 0; }
.vs-down i { position: absolute; left: 6px; top: 5px; border: 4px solid transparent; border-top: 5px solid #ddd; border-bottom: 0; }

/* sheet */
.sheet { height: 659px; display: flex; flex: none; }
.rowheads { width: 29px; background: #2d2d2d; flex: none; }
.rh { height: 20px; color: #a9a9a9; font-size: 15px; line-height: 19px; text-align: center; padding-right: 2px; border-bottom: 1px solid #3c3c3c; }
.r1 { height: 123px; padding-top: 103px; line-height: 20px; }
.r2 { height: 96px; padding-top: 76px; line-height: 20px; }
.rh.sel { background: #6d6d6d; color: #ddd; border-right: 2px solid #1f7a4a; }
.canvas { width: 1508px; background: #dbdff6; position: relative; overflow: hidden; padding-top: 219px; flex: none; }
.vscroll { width: 21px; display: flex; flex-direction: column; }
.vs-thumb { height: 188px; background: #4a4a4a; margin: 0 1px; }
.vs-empty { flex: 1; background: #050505; }

/* pivot */
.pivot { border-collapse: collapse; table-layout: fixed; width: 751px; margin-left: -1px; background: #f5f7fe; color: #555; font-size: 15px; }
.w-c { width: 107px; } .w-d { width: 145px; } .w-e { width: 90px; } .w-f { width: 85px; } .w-g { width: 86px; } .w-h { width: 92px; } .w-i { width: 73px; } .w-j { width: 73px; }
.pivot th, .pivot td { height: 20px; padding: 0 0 3px 3px; line-height: 16px; border: 1px dotted #9e9e9e; white-space: nowrap; text-align: left; overflow: visible; position: relative; }
.pivot tr { height: 20px; }
.pivot th { font-weight: 700; color: #333; }
.pivot td.n { text-align: right; padding: 0 2px 3px 0; }
.pivot td.cur { outline: 2px solid #217346; outline-offset: -1px; }
.dd { position: absolute; right: 1px; top: 1px; width: 18px; height: 17px; background: #fff; border: 1px solid #e2e2e2; }
.dd::after { content: ""; position: absolute; left: 4px; top: 6px; border: 4px solid transparent; border-top: 5px solid #777; border-bottom: 0; }
.dd-s::after { left: 2px; }
.ex { display: inline-block; width: 10px; height: 10px; background: #e4e6ec; margin: 0 3px 0 1px; vertical-align: -1px; position: relative; }
.ex::before { content: ""; position: absolute; left: 2px; top: 4px; width: 6px; height: 1px; background: #8a8a8a; }
.ex.p::after { content: ""; position: absolute; left: 4px; top: 2px; width: 1px; height: 6px; background: #8a8a8a; }

/* KPI cards */
.card { position: absolute; background: #f5f7fe; border-radius: 13px; height: 89px; color: #333; display: flex; flex-direction: column; padding: 14px 0 0 15px; }
.k-t { font-size: 10.500px; font-weight: 700; line-height: 18px; }
.k-v { font-size: 11px; font-weight: 700; line-height: 16px; margin-top: 8px; }
.k-f { font-size: 7.500px; font-weight: 700; line-height: 12px; margin-top: 10px; display: flex; }
.k-f b { font-size: 9px; }
.k1 { left: 11px; top: 22px; width: 89px; }
.k1 .k-v { margin-left: 8px; } .k1 .k-f { margin-left: 3px; gap: 3px; }
.k2 { left: 115px; top: 22px; width: 92px; padding-left: 14px; }
.k2 .k-v { margin-left: 15px; } .k2 .k-f { gap: 21px; }
.k3 { left: 221px; top: 24px; width: 93px; padding-left: 15px; }
.k3 .k-t { margin-top: -2px; } .k3 .k-v { margin-left: 7px; } .k3 .k-f { margin-left: -7px; gap: 27px; }
.k4 { left: 323px; top: 24px; width: 88px; padding-left: 14px; }
.k4 .k-t { margin-top: -2px; } .k4 .k-v { margin-left: 20px; } .k4 .k-f { margin-left: -7px; gap: 15px; }
.k5 { left: 423px; top: 24px; width: 88px; padding-left: 14px; }
.k5 .k-t { margin-top: -2px; } .k5 .k-v { margin-left: 13px; } .k5 .k-f { margin-left: -3px; gap: 12px; }
.k6 { left: 527px; top: 24px; width: 90px; padding-left: 14px; }
.k6 .k-t { margin-top: -2px; } .k6 .k-v { margin-left: 20px; } .k6 .k-f { margin-left: 4px; gap: 12px; }

/* slicers */
.slicer { position: absolute; background: #fff; display: flex; flex-direction: column; border: 2px solid #b9c8e4; padding: 0 8px; }
.s-head { height: 24px; display: flex; align-items: center; gap: 15px; padding: 0 2px 4px 0; border-bottom: 2px solid #c9d6e6; flex: none; font-size: 14px; font-weight: 700; color: #333; }
.s-head span { flex: 1; }
.s-list { display: flex; flex-direction: column; gap: 3px; padding-top: 3px; flex: 1; }
.btn { height: 23px; background: #fff; border: 1px solid #ececec; border-radius: 3px; font-size: 14.500px; line-height: 21px; padding-left: 9px; color: #555; }
.btn.on { background: #b7cbe8; border-color: #b7cbe8; }
.s-year { left: 0; top: 123px; width: 122px; height: 93px; border: 0; padding-left: 9px; padding-right: 9px; }
.s-year .s-head { height: 25px; padding-bottom: 1px; }
.s-year .s-list { padding-top: 4px; }
.s-month { left: 123px; top: 122px; width: 488px; height: 96px; padding-left: 8px; padding-right: 8px; }
.s-month .s-head { height: 22px; padding-bottom: 2px; }
.s-grid { display: grid; grid-template-columns: repeat(6, 1fr); gap: 3px; padding-top: 4px; }
.s-a { left: 772px; top: 281px; width: 208px; height: 246px; }
.s-b { left: 983px; top: 281px; width: 208px; height: 246px; }
.s-c { left: 1192px; top: 281px; width: 208px; height: 246px; }
.s-scroll { display: flex; gap: 5px; flex: 1; }
.s-c .s-list { flex: 1; }
.s-bar { width: 18px; height: 206px; margin-top: 3px; background: #f3f3f3; padding: 20px 3px 0; flex: none; }
.s-bar i { display: block; height: 28px; background: #8e8e8e; }

/* chart */
.chart { position: absolute; left: 764px; top: 15px; width: 647px; height: 254px; background: #f4f6fd; border-radius: 14px; overflow: hidden; }
.chart svg { display: block; }
.c-title { font-size: 20px; font-weight: 700; fill: #666; }
.axis text, .dl text { font-size: 11.500px; fill: #777; text-anchor: middle; }
.bud rect { fill: #aed0ee; stroke: #5b93d3; stroke-width: 2.500; }
.act rect { fill: #2a78c8; }
.lg { font-size: 11.500px; fill: #999; }

.cross { position: absolute; left: 360px; top: 261px; }
.quick { position: absolute; left: 514px; top: 300px; width: 26px; height: 24px; background: #fdfdfd; border: 1px solid #ccc; display: flex; align-items: center; justify-content: center; }

/* sheet tabs */
.sheettabs { height: 23px; background: #2d2d2d; display: flex; align-items: center; flex: none; color: #ddd; }
.nav-arrow { width: 21px; font-size: 13px; color: #ccc; text-align: center; }
.nav-arrow:first-child { margin-left: 10px; }
.stabs { display: flex; height: 23px; margin-left: 23px; width: 650px; }
.st { padding: 0 6px; font-size: 14.700px; line-height: 20px; white-space: nowrap; border-right: 1px solid #555; margin-right: 1px; }
.st.on { background: #fff; color: #1f7a4a; padding: 0 6px; border: 0; margin-right: 0; }
.st-m { padding: 0 8px; }
.addsheet { width: 18px; height: 18px; border: 1.500px solid #ddd; border-radius: 50%; margin-left: 25px; text-align: center; font-size: 16px; line-height: 14px; flex: none; }
.st-dots { width: 20px; margin-left: 156px; color: #bbb; font-size: 14px; text-align: center; }
.hscroll { margin-left: 2px; width: 592px; height: 21px; display: flex; flex: none; }
.hs-b { width: 17px; background: #3a3a3a; border: 1px solid #666; font-size: 10px; text-align: center; line-height: 18px; }
.hs-thumb { width: 513px; background: #474747; border: 1px solid #5a5a5a; }
.hs-empty { width: 45px; background: #050505; }

/* status */
.status { height: 24px; background: #2d2d2d; border-top: 1px solid #3d3d3d; display: flex; align-items: center; color: #ccc; font-size: 13px; flex: none; }
.ready { margin-left: 12px; width: 62px; }
.st-acc { margin-left: 22px; }
.acc { margin-left: 4px; width: 1089px; }
.views { display: flex; margin-left: 12px; height: 24px; width: 132px; }
.v { width: 44px; display: flex; align-items: center; justify-content: center; }
.v.on { background: #555; }
.zoomer { display: flex; align-items: center; margin-left: 4px; }
.z-s { color: #777; width: 11px; text-align: center; }
.z-track { width: 107px; height: 2px; background: #ddd; margin: 0 5px; position: relative; }
.z-track i { position: absolute; left: 50px; top: -6px; width: 5px; height: 14px; background: #eee; }
.z-val { margin-left: 12px; font-size: 13.500px; }

/* taskbar */
.taskbar { flex: 1; background: linear-gradient(90deg, #161616, #1c1c1c 60%, #2a201c); border-bottom: 2px solid #050505; display: flex; align-items: center; position: relative; }
.weather { display: flex; align-items: center; margin-left: 22px; width: 408px; color: #ddd; font-size: 12.500px; flex: none; }
.w-n { font-size: 10px; fill: #fff; text-anchor: middle; }
.w-t { display: flex; flex-direction: column; line-height: 17px; margin: -2px 0 0 5px; }
.center { display: flex; align-items: center; }
.search { width: 238px; height: 36px; border-radius: 18px; background: #4a4a48; margin-left: 14px; display: flex; align-items: center; padding-left: 10px; color: #ccc; font-size: 13.500px; position: relative; }
.search span { margin-left: 10px; }
.deco { position: absolute; right: 3px; top: 1px; }
.ti { flex: none; margin-left: 21px; }
.ti-task { margin-left: 12px; }
.ti-file { margin-left: 19px; }
.ti-m { margin-left: 20px; }
.ti-hw { margin-left: 18px; }
.ti-cl { margin-left: 20px; }
.ti-wx { margin-left: 19px; }
.ti-excel { margin-left: 8px; width: 45px; height: 44px; background: #2c2c2c; border-radius: 5px; display: flex; align-items: center; justify-content: center; position: relative; }
.ti-excel i { position: absolute; bottom: 1px; left: 15px; width: 16px; height: 3px; background: #3fa9e8; border-radius: 2px; }
.x-t { font-size: 11px; font-weight: 700; fill: #fff; text-anchor: middle; }
.tray { position: absolute; left: 1220px; top: 0; width: 317px; height: 50px; display: flex; align-items: center; gap: 18px; color: #ddd; }
.tr-up { font-size: 14px; width: 10px; }
.tr-m { margin-left: 2px; }
.tr-zh { font-size: 15px; }
.tr-tight { margin-left: -9px; }
.clock { display: flex; flex-direction: column; align-items: flex-end; font-size: 12.500px; line-height: 17px; margin-left: auto; }

/* big overlay title */
.bigtitle { position: absolute; left: 531px; top: 251px; width: 510px; font-size: 125px; line-height: 174px; font-weight: 700; color: #f4202b; -webkit-text-stroke: 2.500px #4a4a4a; paint-order: stroke fill; text-shadow: 3px 4px 5px rgba(80,80,80,.4); white-space: nowrap; }
```
